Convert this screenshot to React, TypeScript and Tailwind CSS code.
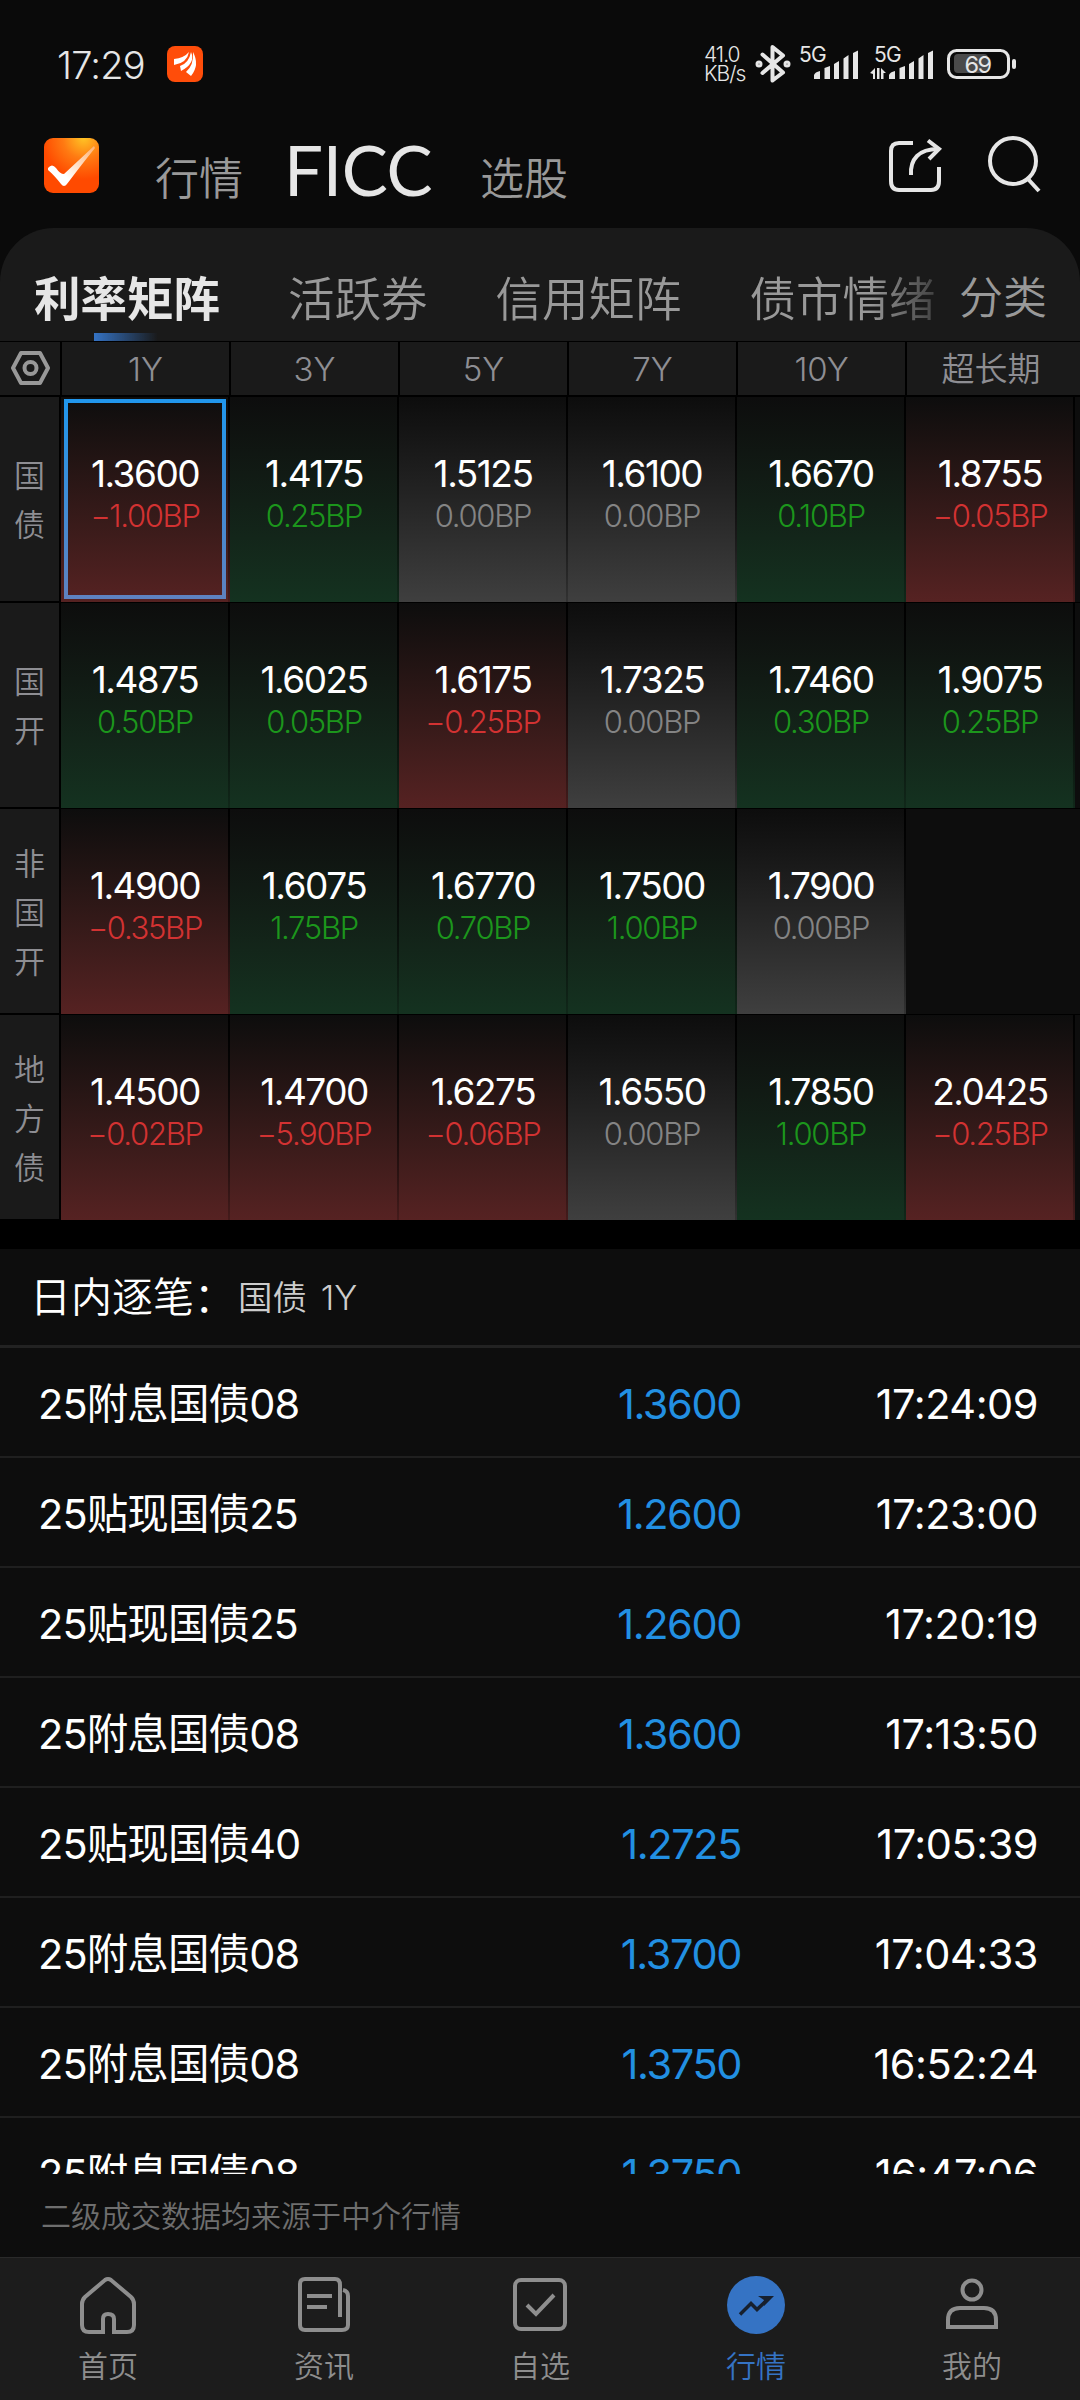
import clsx from "clsx";
import type { ReactNode } from "react";

type Cell = { value: string; bp: string } | null;
type Trade = { bond: string; price: string; time: string };

const terms = ["1Y", "3Y", "5Y", "7Y", "10Y", "超长期"];

const matrix: { label: string; cells: Cell[] }[] = [
  {
    label: "国债",
    cells: [
      { value: "1.3600", bp: "−1.00" },
      { value: "1.4175", bp: "0.25" },
      { value: "1.5125", bp: "0.00" },
      { value: "1.6100", bp: "0.00" },
      { value: "1.6670", bp: "0.10" },
      { value: "1.8755", bp: "−0.05" },
    ],
  },
  {
    label: "国开",
    cells: [
      { value: "1.4875", bp: "0.50" },
      { value: "1.6025", bp: "0.05" },
      { value: "1.6175", bp: "−0.25" },
      { value: "1.7325", bp: "0.00" },
      { value: "1.7460", bp: "0.30" },
      { value: "1.9075", bp: "0.25" },
    ],
  },
  {
    label: "非国开",
    cells: [
      { value: "1.4900", bp: "−0.35" },
      { value: "1.6075", bp: "1.75" },
      { value: "1.6770", bp: "0.70" },
      { value: "1.7500", bp: "1.00" },
      { value: "1.7900", bp: "0.00" },
      null,
    ],
  },
  {
    label: "地方债",
    cells: [
      { value: "1.4500", bp: "−0.02" },
      { value: "1.4700", bp: "−5.90" },
      { value: "1.6275", bp: "−0.06" },
      { value: "1.6550", bp: "0.00" },
      { value: "1.7850", bp: "1.00" },
      { value: "2.0425", bp: "−0.25" },
    ],
  },
];

const trades: Trade[] = [
  { bond: "25附息国债08", price: "1.3600", time: "17:24:09" },
  { bond: "25贴现国债25", price: "1.2600", time: "17:23:00" },
  { bond: "25贴现国债25", price: "1.2600", time: "17:20:19" },
  { bond: "25附息国债08", price: "1.3600", time: "17:13:50" },
  { bond: "25贴现国债40", price: "1.2725", time: "17:05:39" },
  { bond: "25附息国债08", price: "1.3700", time: "17:04:33" },
  { bond: "25附息国债08", price: "1.3750", time: "16:52:24" },
  { bond: "25附息国债08", price: "1.3750", time: "16:47:06" },
];

function Signal({ traffic = false }: { traffic?: boolean }) {
  return (
    <svg className="overflow-visible" width="64" height="42" viewBox="0 -6 64 42" fill="#e6e6e6">
      <text x="0" y="18" fontSize="21" letterSpacing="-0.8">
        5G
      </text>
      {traffic && <path d="M-4 29 L1 24 V35 H-1 V30 Z M3 24 H5.500 V35 H3 Z M7 24 L12 29 H9.500 V35 H7 Z" />}
      <path d="M15 35 V31 Q16 28 21 27 V35 Z M25.500 35 V24 L31 22 V35 Z M35 35 V20 L40 17 V35 Z M44.500 35 V14.500 L49.500 11 V35 Z M54 35 V9 L59 6.500 V35 Z" />
    </svg>
  );
}

function StatusBar() {
  return (
    <div className="flex h-[128px] items-start pl-[57px] text-[#e6e6e6]">
      <span className="mt-[42px] w-[110px] text-[38px] leading-[46px] font-[350] tracking-[-0.8px]">17:29</span>
      <svg className="mt-[46px]" width="36" height="36" viewBox="0 0 36 36">
        <rect width="36" height="36" rx="8" fill="#ff4d0a" />
        <path d="M7 19 V13 Q17 12 22 6 Q20 17 7 19 Z" fill="#fff" />
        <path d="M14 25 L13 20 Q22 17 24 6 Q29 17 14 25 Z" fill="#fff" />
        <path d="M24 30 L19 26 Q27 19 26 6 Q33 19 24 30 Z" fill="#fff" />
      </svg>
      <div className="mt-[45px] ml-[501px] w-[51px] text-[21px] leading-[19px] font-[350] tracking-[-1px]">
        <div>41.0</div>
        <div>KB/s</div>
      </div>
      <svg className="mt-[44px]" width="36" height="40" viewBox="0 0 36 40" fill="none" stroke="#e6e6e6" strokeWidth="4" strokeLinejoin="round" strokeLinecap="round">
        <path d="M7.500 10.500 L28 28.500 L17.500 36.500 V3 L28 11.500 L7.500 29" />
        <circle cx="4" cy="20" r="1.500" />
        <circle cx="32" cy="20" r="1.500" />
      </svg>
      <div className="mt-[38px] ml-[8px] flex gap-[11px]">
        <Signal />
        <Signal traffic />
      </div>
      <svg className="mt-[49px] ml-[9px]" width="70" height="31" viewBox="0 0 70 31">
        <rect x="1.500" y="1.500" width="60" height="27" rx="8" fill="none" stroke="#e6e6e6" strokeWidth="3" />
        <rect x="7" y="5" width="34" height="19" rx="4" fill="#4a4a4a" />
        <rect x="65" y="10" width="4" height="10" rx="2" fill="#e6e6e6" />
        <text x="17.500" y="24" fontSize="23.500" letterSpacing="-1.500" fill="#e6e6e6">
          69
        </text>
      </svg>
    </div>
  );
}

function TopNav() {
  return (
    <div className="flex h-[100px] items-start pl-[44px]">
      <svg className="mt-[10px]" width="56" height="55" viewBox="0 0 56 55">
        <defs>
          <radialGradient id="logo" cx="0.72" cy="0" r="0.75">
            <stop offset="0" stopColor="#ffc425" />
            <stop offset="0.5" stopColor="#ff7a12" />
            <stop offset="1" stopColor="#ff4a00" />
          </radialGradient>
          <linearGradient id="tick" x1="0.3" y1="0.7" x2="1" y2="0">
            <stop offset="0" stopColor="#fff" />
            <stop offset="1" stopColor="#ffb070" />
          </linearGradient>
        </defs>
        <rect width="55" height="55" rx="9" fill="url(#logo)" />
        <path d="M4 30 Q8 25 12 30 Q16 36 20 36 Q34 23 50 8 L51 10 Q38 26 23 46 Q20 50 17 46 Q10 37 4 32 Z" fill="url(#tick)" />
      </svg>
      <span className="mt-[21px] ml-[55px] text-[44px] leading-[60px] font-[350] text-[#999]">行情</span>
      <span className="mt-[2px] ml-[41px] w-[153px] font-['Lato'] text-[69px] leading-[80px] tracking-[-0.3px] text-[#e6e6e6]">FICC</span>
      <span className="mt-[21px] ml-[43px] text-[44px] leading-[60px] font-[350] text-[#999]">选股</span>
      <svg className="mt-[7px] ml-[319px]" width="56" height="60" viewBox="0 0 56 60" fill="none" stroke="#e6e6e6" strokeWidth="4">
        <path d="M26 8 H12 Q4 8 4 16 V46 Q4 55 12 55 H44 Q52 55 52 46 V32" />
        <path d="M24 40 C23 24 32 14 51 14" />
        <path d="M41 5.500 L52 14 L42 24" />
      </svg>
      <svg className="mt-[6px] ml-[43px]" width="56" height="60" viewBox="0 0 56 60" fill="none" stroke="#e6e6e6" strokeWidth="4">
        <circle cx="27" cy="27" r="23" />
        <path d="M42 45 L53 57" />
      </svg>
    </div>
  );
}

function Tabs() {
  return (
    <div className="flex h-[113px] items-start overflow-hidden rounded-t-[54px] bg-[#1a1a1a] text-[46.5px] leading-[60px] font-[350] whitespace-nowrap text-[#999]">
      <div className="flex w-[936px] gap-[68px] overflow-hidden pt-[41px] pl-[34px] [mask-image:linear-gradient(to_right,#000_870px,rgb(0_0_0/0.3)_936px)]">
        <div className="flex flex-col">
          <span className="font-bold text-[#e6e6e6]">利率矩阵</span>
          <div className="mt-[4px] ml-[60px] h-[8px] w-[64px] bg-linear-to-r from-[#3573c4] to-transparent" />
        </div>
        <span>活跃券</span>
        <span>信用矩阵</span>
        <span>债市情绪</span>
      </div>
      <span className="mt-[40px] ml-[23px] text-[44px]">分类</span>
    </div>
  );
}

function MatrixCell({ cell, selected }: { cell: Cell; selected: boolean }) {
  if (!cell) return <div className="bg-[#0d0d0d]" />;
  const down = cell.bp.startsWith("−");
  const flat = cell.bp === "0.00";

  return (
    <div
      className={clsx(
        "flex bg-linear-to-b from-[#0d0d0d]",
        down ? "to-[#562222]" : flat ? "to-[#3f3f3f]" : "to-[#143220]",
      )}
    >
      <div
        className={clsx(
          "flex grow flex-col items-center",
          selected
            ? "mt-[2px] mr-[2px] mb-[3px] ml-[3px] border-4 pt-[49px] [border-image:linear-gradient(to_bottom,#2196ec,#5e82c0)_1]"
            : "pt-[55px] pl-px",
        )}
      >
        <span className="text-[37px] leading-[44px] tracking-[-1.5px] text-white">{cell.value}</span>
        <span
          className={clsx(
            "text-[31px] leading-[40px] font-[350] tracking-[-1.3px]",
            down ? "text-[#d23232]" : flat ? "text-[#848484]" : "text-[#1c961c]",
          )}
        >
          {cell.bp}BP
        </span>
      </div>
      <div className="w-[2px] bg-linear-to-b from-black to-black/20" />
    </div>
  );
}

function RateMatrix() {
  return (
    <div className="h-[908px] bg-black pt-px">
      <div className="grid h-[52px] grid-cols-[60px_repeat(5,167px)_173px] gap-x-[2px] text-[33px] font-[350] text-[#8e8e93]">
        <div className="flex items-center justify-center bg-[#1a1a1a]">
          <svg width="40" height="36" viewBox="0 0 40 36" fill="none" stroke="#999" strokeWidth="4">
            <path d="M11 3 H30 L38 18 L30 33 H11 L3 18 Z" strokeLinejoin="round" />
            <circle cx="20.500" cy="18" r="6" />
          </svg>
        </div>
        {terms.map((term) => (
          <div key={term} className="flex items-center justify-center bg-[#1a1a1a] pt-[3px] last:pr-[5px]">
            <span>{term}</span>
          </div>
        ))}
      </div>
      <div className="mt-[3px]">
        {matrix.map((row, r) => (
          <div key={row.label} className="mb-px grid h-[205px] grid-cols-[61px_repeat(6,169px)_5px]">
            <div className="mr-[2px] mb-px flex flex-col items-center justify-center bg-[#1a1a1a] pt-[2px] text-[31px] leading-[49px] font-[350] text-[#8e8e93]">
              {row.label.split("").map((ch) => (
                <span key={ch}>{ch}</span>
              ))}
            </div>
            {row.cells.map((cell, c) => (
              <MatrixCell key={c} cell={cell} selected={r === 0 && c === 0} />
            ))}
            <div className="bg-[#0d0d0d]" />
          </div>
        ))}
      </div>
    </div>
  );
}

function TradeList() {
  return (
    <div className="h-[925px] overflow-hidden">
      <div className="flex h-[99px] items-center border-b-[3px] border-[#222] pt-[2px] pl-[30px]">
        <span className="w-[208px] text-[41px] font-[350] text-white">日内逐笔：</span>
        <span className="text-[34.5px] font-[350] [word-spacing:4px] text-[#ccc]">国债 1Y</span>
      </div>
      {trades.map((t) => (
        <div key={t.time} className="flex h-[110px] items-center border-b-2 border-[#1f1f1f] pt-[5px] pl-[38px] text-[41.5px] text-white">
          <span className="w-[402px] tracking-[-0.9px]">{t.bond}</span>
          <span className="w-[301px] text-right tracking-[-1.4px] text-[#2290e2]">{t.price}</span>
          <span className="w-[297px] text-right tracking-[-0.5px]">{t.time}</span>
        </div>
      ))}
    </div>
  );
}

function NavItem({ label, active = false, children }: { label: string; active?: boolean; children: ReactNode }) {
  return (
    <div className={clsx("flex flex-col items-center pt-[17px]", active ? "text-[#3573c4]" : "text-[#8e8e8e]")}>
      <svg width="60" height="62" viewBox="0 0 60 62" fill="none" stroke="currentColor" strokeWidth="4">
        {children}
      </svg>
      <span className="mt-[7px] text-[30px] leading-[44px] font-[350]">{label}</span>
    </div>
  );
}

function BottomNav() {
  return (
    <div className="grid h-[143px] grid-cols-5 border-t border-[#2a2a2a] bg-[#1c1c1c]">
      <NavItem label="首页">
        <path d="M27 5 Q30 3 33 5 L53 22 Q56 25 56 29 V50 Q56 57 49 57 H36 V44 Q36 39 30 39 Q25 39 25 44 V57 H11 Q4 57 4 50 V29 Q4 25 7 22 Z" />
      </NavItem>
      <NavItem label="资讯">
        <path d="M46 42 V10 Q46 4 41 4 H11 Q6 4 6 9 V50 Q6 55 11 55 H48 Q54 55 54 50 V21 Q54 16 49 15" />
        <path d="M13 21 H38 M13 32 H33" />
      </NavItem>
      <NavItem label="自选">
        <rect x="5" y="5" width="50" height="49" rx="6" />
        <path d="M17 30 L26 39 L44 20" />
      </NavItem>
      <NavItem label="行情" active>
        <circle cx="30" cy="30" r="29" fill="currentColor" stroke="none" />
        <path d="M14 39.500 L25 28.500 L31 34.500 L42 24" stroke="#17202e" strokeWidth="3.500" />
        <path d="M32 21 H48 L38 31 V25 Z" fill="#17202e" stroke="none" />
      </NavItem>
      <NavItem label="我的">
        <circle cx="30" cy="15" r="9.500" />
        <path d="M6 52 V45 Q6 33 18 33 H42 Q54 33 54 45 V52 Z" />
      </NavItem>
    </div>
  );
}

export default function App() {
  return (
    <div className="h-[2400px] w-[1080px] overflow-hidden bg-[#0a0a0a] font-['Inter','Noto_Sans_CJK_SC',sans-serif]">
      <StatusBar />
      <TopNav />
      <Tabs />
      <RateMatrix />
      <div className="bg-[#0d0d0d]">
        <TradeList />
        <div className="h-[83px] pt-[20px] pl-[41px] text-[30px] leading-[44px] font-[350] text-[#6e6e6e]">
          二级成交数据均来源于中介行情
        </div>
      </div>
      <BottomNav />
    </div>
  );
}
